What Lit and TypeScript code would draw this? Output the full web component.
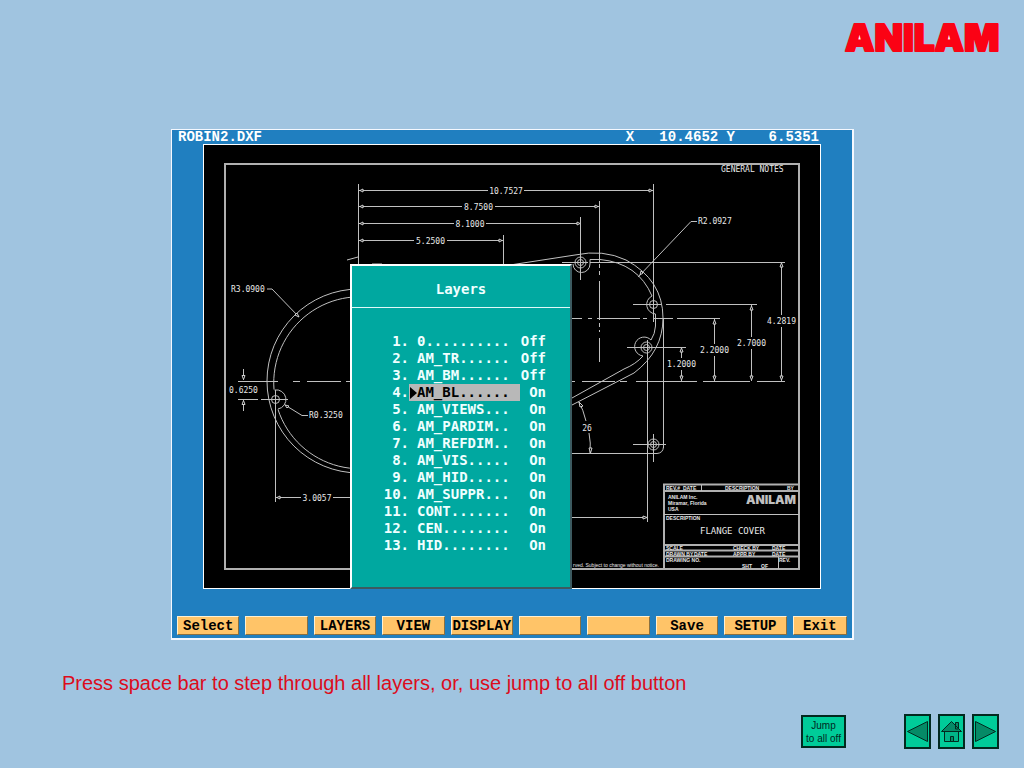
import { LitElement, html, css, svg } from "lit";
import { customElement, state } from "lit/decorators.js";
import { classMap } from "lit/directives/class-map.js";

interface Layer {
  name: string;
  on: boolean;
}

const LAYER_NAMES = [
  "0", "AM_TR", "AM_BM", "AM_BL", "AM_VIEWS", "AM_PARDIM", "AM_REFDIM",
  "AM_VIS", "AM_HID", "AM_SUPPR", "CONT", "CEN", "HID",
];

const SOFT_KEYS = ["Select", "", "LAYERS", "VIEW", "DISPLAY", "", "", "Save", "SETUP", "Exit"];

/* Dimension lines: start, end, gap left for the figure */
const HORIZONTAL_DIMS = [
  { y: 190.5, x1: 359, x2: 653, g1: 488, g2: 524, text: "10.7527" },
  { y: 206.5, x1: 359, x2: 599, g1: 462, g2: 495, text: "8.7500" },
  { y: 223.5, x1: 359, x2: 581, g1: 454, g2: 486, text: "8.1000" },
  { y: 240.5, x1: 359, x2: 503, g1: 414, g2: 447, text: "5.2500" },
  { y: 497.5, x1: 276, x2: 358, g1: 301, g2: 333, text: "3.0057" },
];
const VERTICAL_DIMS = [
  { x: 781.5, y1: 262, y2: 381, g1: 315, g2: 327, text: "4.2819" },
  { x: 751.5, y1: 305, y2: 381, g1: 337, g2: 349, text: "2.7000" },
  { x: 714.5, y1: 319, y2: 381, g1: 344, g2: 356, text: "2.2000" },
  { x: 681.5, y1: 347, y2: 381, g1: 358, g2: 370, text: "1.2000" },
];

@customElement("cad-drawing")
export class CadDrawing extends LitElement {
  static styles = css`
    :host { display: block; }
    .sheet { display: block; width: 100%; height: auto; background: #000; }
    .line { fill: none; stroke: #c0c0c0; stroke-width: 1; }
    .frame { fill: none; stroke: #b0b0b0; stroke-width: 2; }
    .head { fill: #000; stroke: #d0d0d0; stroke-width: 1; }
    .dim, .tiny, .title, .mark { fill: #e8e8e8; font-family: "DejaVu Sans Mono", monospace; }
    .dim { font-size: 8px; }
    .title { font-size: 9px; }
    .tiny { font-size: 5px; font-family: "Liberation Sans", sans-serif; font-weight: bold; }
    .note { font-weight: normal; }
    .mark { fill: #c0c0c0; font-family: Inter, sans-serif; font-weight: 900; font-size: 12px; }
    .middle { text-anchor: middle; }
  `;

  render() {
    return html`
      <svg class="sheet" viewBox="204 145 616 443" role="img" aria-label="Flange cover drawing">
        <rect class="frame" x="225" y="164" width="574" height="405" />
        <text class="dim" x="721" y="172">GENERAL NOTES</text>

        ${HORIZONTAL_DIMS.map((d) => svg`
          <path class="line" d="M${d.x1} ${d.y}H${d.g1}M${d.g2} ${d.y}H${d.x2}" />
          <path class="head" d="M${d.x1 + 1} ${d.y}l3 -1.5v3z M${d.x2 - 1} ${d.y}l-3 -1.5v3z" />
          <text class="dim middle" x=${(d.g1 + d.g2) / 2} y=${d.y + 3}>${d.text}</text>`)}
        ${VERTICAL_DIMS.map((d) => svg`
          <path class="line" d="M${d.x} ${d.y1}V${d.g1}M${d.x} ${d.g2}V${d.y2}" />
          <path class="head" d="M${d.x} ${d.y1 + 1}l-1.5 4h3z M${d.x} ${d.y2 - 1}l-1.5 -4h3z" />
          <text class="dim middle" x=${d.x} y=${d.g2 - 3}>${d.text}</text>`)}

        <!-- extension and centre lines -->
        <path class="line" d="M358.5 184V266M653.5 184V322M503.5 235V266M580.5 217V280M599.5 201V262
          M599.5 264V268M599.5 271V275M599.5 281V320M599.5 323V327M599.5 330V332M599.5 338V362
          M590 262.5H785M633 304.5H661M666 304.5H757M627 347.5H686
          M572 318.5H582M588 318.5H592M597 318.5H640M643 318.5H647M654 318.5H673M677 318.5H720
          M238 381.5H278M293 381.5H300M307 381.5H341M346 381.5H352
          M572 381.5H575M582 381.5H615M620 381.5H627M636 381.5H697M703 381.5H750M757 381.5H785
          M238 399.5H258M261 399.5H288M275.5 390V502M647.5 340V522M663.5 318V448
          M347 260l11 -3M372 264H382M572 517.5H647" />
        <path class="head" d="M647 517.5l-4 -1.5v3z" />

        <!-- left bore -->
        <circle class="line" cx="359" cy="381" r="92" />
        <path class="line" d="M274 389.5A86 86 0 1 1 278 409.5M274.5 390A9.5 9.5 0 1 1 278 409" />
        <circle class="line" cx="275.5" cy="399.5" r="4" />
        <path class="line" d="M267 289H272L299 317M308 415.5H302L285 405M243.5 369V380M243.5 400V411" />
        <path class="head" d="M299 317l-4 -2l2 -2zM285 405l4 1l-2 2zM243.5 379.5l-1.5 -4h3zM243.5 400.5l-1.5 4h3z" />
        <text class="dim" x="231" y="292">R3.0900</text>
        <text class="dim" x="309" y="418">R0.3250</text>
        <text class="dim" x="229" y="393">0.6250</text>

        <!-- right lobe -->
        <path class="line" d="M510 265L575 255Q603 249 626 260Q663 280 663 318Q663 351 634 373L572 405" />
        <path class="line" d="M590 264V259.5H600Q638 263 652 296M655.5 314V326Q655 334 651 340M643 356Q636 364 624 369L572 398" />
        <path class="line" d="M573 264A8.5 8.5 0 0 0 590 264M652 296A9.5 9.5 0 0 0 655.5 314M651 340A9.5 9.5 0 1 0 643 356" />
        <path class="line" d="M572 453.5H657Q663 453 663.5 447" />
        <path class="line" d="M638 277L691 221.5H697" />
        <path class="head" d="M640 275l1 -4l2 2z" />
        <text class="dim" x="698" y="224">R2.0927</text>
        ${[[580.5, 262.5], [646.5, 347.5], [653.5, 444.5]].map(([x, y]) => svg`
          <circle class="line" cx=${x} cy=${y} r="3" />
          <circle class="line" cx=${x} cy=${y} r="5.5" />`)}
        <circle class="line" cx="653.5" cy="304.5" r="4" />
        <path class="line" d="M562 262.5H588M633 444.5H666M653.5 434V462M579 402Q583 409 586 421M589 433Q591 443 590 453" />
        <path class="head" d="M579 402l1 5l3 -1zM590.5 453l-1.5 -5h3z" />
        <text class="dim middle" x="587" y="431">26</text>

        <!-- title block -->
        <path class="frame" d="M664 569V484.5H799M664 491H799M664 545H799M664 550.5H799M664 556.5H799" />
        <path class="line" d="M664 514.5H799M778.5 557V569M701.5 485V491" />
        <text class="tiny" x="666" y="490">REV.#</text>
        <text class="tiny" x="683" y="490">DATE</text>
        <text class="tiny" x="725" y="490">DESCRIPTION</text>
        <text class="tiny" x="787" y="490">BY</text>
        <text class="tiny" x="668" y="499">ANILAM Inc.</text>
        <text class="tiny" x="668" y="505">Miramar, Florida</text>
        <text class="tiny" x="668" y="511">USA</text>
        <text class="mark" x="746" y="504">ANILAM</text>
        <text class="tiny" x="666" y="520">DESCRIPTION</text>
        <text class="title" x="700" y="534">FLANGE COVER</text>
        <text class="tiny" x="666" y="550">SCALE</text>
        <text class="tiny" x="733" y="550">CHECK BY</text>
        <text class="tiny" x="772" y="550">DATE</text>
        <text class="tiny" x="666" y="556">DRAWN BY</text>
        <text class="tiny" x="694" y="556">DATE</text>
        <text class="tiny" x="733" y="556">APPR BY</text>
        <text class="tiny" x="772" y="556">DATE</text>
        <text class="tiny" x="666" y="562">DRAWING NO.</text>
        <text class="tiny" x="779" y="562">REV.</text>
        <text class="tiny" x="742" y="568">SHT</text>
        <text class="tiny" x="761" y="568">OF</text>
        <text class="tiny note" x="573" y="567">rved. Subject to change without notice.</text>
      </svg>
    `;
  }
}

@customElement("app-root")
export class AppRoot extends LitElement {
  @state() private current = 3;
  @state() private layers: Layer[] = LAYER_NAMES.map((name, i) => ({ name, on: i > 2 }));

  static styles = css`
    :host { display: block; }
    .page {
      box-sizing: border-box;
      min-height: 100vh;
      display: flex;
      flex-direction: column;
      background: #a0c4e0;
      font-family: "Liberation Sans", Arial, sans-serif;
    }
    .top { display: flex; justify-content: flex-end; padding: 16px 16px 69px; }
    .logo { display: block; width: 168px; height: 44px; }
    .logo-text {
      font-family: Inter, "Liberation Sans", sans-serif;
      font-weight: 900;
      font-size: 37px;
      fill: #fb0214;
      stroke: #fb0214;
      stroke-width: 2;
      stroke-linejoin: round;
    }
    .logo-gap { fill: #fff; }

    .window {
      margin: 0 170px 0 171px;
      border: 2px solid #f4f8ff;
      border-width: 1px 2px 2px 1px;
      background: #207fc0;
    }
    .mono { font-family: "Liberation Mono", "Courier New", monospace; font-weight: bold; font-size: 14px; }
    .title { display: flex; justify-content: space-between; padding: 0 33px 0 6px; height: 14px; line-height: 14px; color: #fff; }
    .coords { white-space: pre; }
    .canvas { position: relative; margin: 0 31px; border: 1px solid #fff; }

    .dialog {
      position: absolute;
      left: 146px;
      top: 119px;
      bottom: -1px;
      width: 218px;
      border: 2px solid #fff;
      border-right-color: #3c5a60;
      border-bottom-color: #3c5a60;
      background: #00a8a0;
      color: #f0ffff;
      font-family: "DejaVu Sans Mono", "Liberation Mono", monospace;
      font-weight: bold;
      font-size: 14px;
    }
    .dialog-title {
      margin: 0;
      padding: 15px 0 9px;
      border-bottom: 1px solid #e0f8f8;
      font-size: 14px;
      line-height: 17px;
      text-align: center;
    }
    .layers { list-style: none; margin: 0; padding: 25px 0 0 28px; }
    .layer {
      display: grid;
      grid-template-columns: 29px 111px 26px;
      padding: 0;
      border: 0;
      background: none;
      color: inherit;
      font: inherit;
      line-height: 17px;
      text-align: left;
      white-space: pre;
    }
    .number, .status { text-align: right; }
    .name { display: flex; }
    .pointer { display: block; width: 8px; height: 17px; }
    .pointer-shape { fill: none; }
    .current .name { background: #b8b8b8; color: #000; }
    .current .pointer-shape { fill: #000; }

    .keys { display: grid; grid-template-columns: repeat(9, 62fr) 54fr; gap: 6px; padding: 27px 5px 3px; }
    .key {
      min-width: 0;
      height: 19px;
      padding: 0;
      border: 1px solid #fff0d0;
      border-right-color: #8a7040;
      border-bottom-color: #8a7040;
      background: #ffc468;
      color: #000;
      line-height: 16px;
      text-align: center;
    }

    .hint { margin: 0; padding: 31px 62px 0; color: #dc0c1c; font-size: 20px; line-height: 24px; }
    .nav { display: flex; justify-content: flex-end; align-items: center; gap: 7px; padding: 19px 25px 19px; }
    .jump, .step { padding: 0; border: 2px solid #02291f; background: #00cc99; color: #02291f; }
    .jump {
      width: 45px;
      height: 33px;
      margin-right: 51px;
      font-family: "Liberation Sans", Arial, sans-serif;
      font-size: 10px;
      line-height: 13px;
      white-space: nowrap;
      display: flex;
      flex-direction: column;
      align-items: center;
      justify-content: center;
    }
    .step { width: 27px; height: 35px; display: grid; place-items: center; }
    .glyph { display: block; width: 23px; height: 27px; fill: #058a66; stroke: #02291f; stroke-width: 1; }
    .wall { fill: #00b588; }
  `;

  connectedCallback() {
    super.connectedCallback();
    window.addEventListener("keydown", this.onKey);
  }

  disconnectedCallback() {
    window.removeEventListener("keydown", this.onKey);
    super.disconnectedCallback();
  }

  private onKey = (event: KeyboardEvent) => {
    if (event.key !== " ") return;
    event.preventDefault();
    this.layers = this.layers.map((l, i) => (i === this.current ? { ...l, on: false } : l));
    this.move(1);
  };

  private move(by: number) {
    this.current = Math.max(0, Math.min(this.layers.length - 1, this.current + by));
  }

  private allOff() {
    this.layers = this.layers.map((l) => ({ ...l, on: false }));
  }

  private renderLayer(layer: Layer, index: number) {
    const selected = index === this.current;
    return html`
      <li>
        <button class=${classMap({ layer: true, current: selected })} @click=${() => (this.current = index)}>
          <span class="number">${index + 1}.</span><span class="name"><svg class="pointer" viewBox="0 0 8 17" aria-hidden="true"><path class="pointer-shape" d="M1 3L8 9L1 15z" /></svg>${layer.name.padEnd(11, ".")}</span><span class="status">${layer.on ? "On" : "Off"}</span>
        </button>
      </li>`;
  }

  render() {
    return html`
      <main class="page">
        <header class="top">
          <svg class="logo" viewBox="0 0 168 44" role="img" aria-label="ANILAM">
            <rect class="logo-gap" x="15" y="16" width="10" height="9" />
            <rect class="logo-gap" x="104" y="16" width="10" height="9" />
            <text class="logo-text" x="5" y="35">ANILAM</text>
          </svg>
        </header>

        <section class="window">
          <div class="title mono">
            <span>ROBIN2.DXF</span>
            <span class="coords">X   10.4652 Y    6.5351</span>
          </div>
          <div class="canvas">
            <cad-drawing></cad-drawing>
            <div class="dialog" role="dialog" aria-labelledby="layers-title">
              <h2 class="dialog-title" id="layers-title">Layers</h2>
              <ol class="layers">${this.layers.map((l, i) => this.renderLayer(l, i))}</ol>
            </div>
          </div>
          <div class="keys">
            ${SOFT_KEYS.map((k, i) => html`<button class="key mono" aria-label=${k || `Soft key ${i + 1}`}>${k}</button>`)}
          </div>
        </section>

        <p class="hint">Press space bar to step through all layers, or, use jump to all off button</p>

        <nav class="nav" aria-label="Slides">
          <button class="jump" @click=${this.allOff}><span>Jump</span><span>to all off</span></button>
          <button class="step" aria-label="Previous" @click=${() => this.move(-1)}>
            <svg class="glyph" viewBox="0 0 23 27"><path d="M1.5 13.5L21.5 3.5V23.5z" /></svg>
          </button>
          <button class="step" aria-label="Home" @click=${() => (this.current = 0)}>
            <svg class="glyph" viewBox="0 0 23 27">
              <path class="wall" d="M4.5 13.5H18.5V23.5H4.5z" />
              <path d="M15.5 4.5H18.5V11H15.5zM1.5 13.5L11.5 3.5L21.5 13.5zM10.5 18.5H13.5V23.5H10.5z" />
            </svg>
          </button>
          <button class="step" aria-label="Next" @click=${() => this.move(1)}>
            <svg class="glyph" viewBox="0 0 23 27"><path d="M1.5 3.5L21.5 13.5L1.5 23.5z" /></svg>
          </button>
        </nav>
      </main>
    `;
  }
}
